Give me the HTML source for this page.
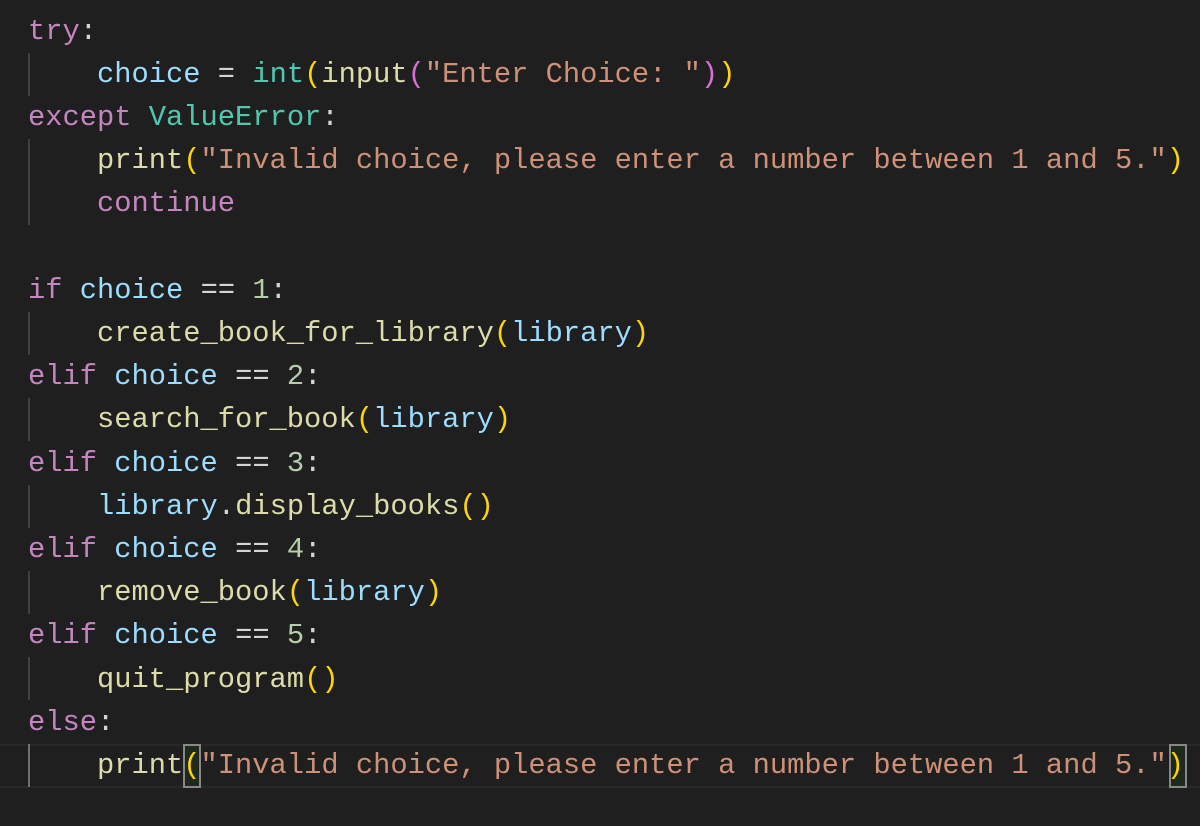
<!DOCTYPE html>
<html><head><style>
body{margin:0;width:1200px;height:826px;background:#1f1f1f;overflow:hidden;position:relative;font-family:"Liberation Mono",monospace;font-size:28.75px;color:#d4d4d4}
.l{position:absolute;left:28px;height:43.2px;line-height:43.2px;white-space:pre}
.k{color:#c586c0}.v{color:#9cdcfe}.f{color:#dcdcaa}.s{color:#ce9178}.n{color:#b5cea8}.c{color:#4ec9b0}.y{color:#ffd700}.p{color:#da70d6}
.g{position:absolute;left:28px;width:2px;background:#404040}
.hl{position:absolute;left:0;width:1200px;top:744px;height:40px;border-top:2px solid #282828;border-bottom:2px solid #282828}
.box{position:absolute;border:2px solid #888;background:#1e2a1e}
</style></head><body>
<div class="hl"></div>
<div class="box" style="left:183px;top:744px;width:14px;height:40px"></div>
<div class="box" style="left:1169px;top:744px;width:14px;height:40px"></div>
<div class="g" style="top:53px;height:43px"></div>
<div class="g" style="top:139px;height:86px"></div>
<div class="g" style="top:312px;height:43px"></div>
<div class="g" style="top:398px;height:43px"></div>
<div class="g" style="top:485px;height:43px"></div>
<div class="g" style="top:571px;height:43px"></div>
<div class="g" style="top:657px;height:43px"></div>
<div class="g" style="top:744px;height:43px;background:#707070"></div>
<div class="l" style="top:9.6px"><span class="k">try</span>:</div>
<div class="l" style="top:52.8px">    <span class="v">choice</span> = <span class="c">int</span><span class="y">(</span><span class="f">input</span><span class="p">(</span><span class="s">"Enter Choice: "</span><span class="p">)</span><span class="y">)</span></div>
<div class="l" style="top:96px"><span class="k">except</span> <span class="c">ValueError</span>:</div>
<div class="l" style="top:139.2px">    <span class="f">print</span><span class="y">(</span><span class="s">"Invalid choice, please enter a number between 1 and 5."</span><span class="y">)</span></div>
<div class="l" style="top:182.4px">    <span class="k">continue</span></div>
<div class="l" style="top:268.8px"><span class="k">if</span> <span class="v">choice</span> == <span class="n">1</span>:</div>
<div class="l" style="top:312px">    <span class="f">create_book_for_library</span><span class="y">(</span><span class="v">library</span><span class="y">)</span></div>
<div class="l" style="top:355.2px"><span class="k">elif</span> <span class="v">choice</span> == <span class="n">2</span>:</div>
<div class="l" style="top:398.4px">    <span class="f">search_for_book</span><span class="y">(</span><span class="v">library</span><span class="y">)</span></div>
<div class="l" style="top:441.6px"><span class="k">elif</span> <span class="v">choice</span> == <span class="n">3</span>:</div>
<div class="l" style="top:484.8px">    <span class="v">library</span>.<span class="f">display_books</span><span class="y">()</span></div>
<div class="l" style="top:528px"><span class="k">elif</span> <span class="v">choice</span> == <span class="n">4</span>:</div>
<div class="l" style="top:571.2px">    <span class="f">remove_book</span><span class="y">(</span><span class="v">library</span><span class="y">)</span></div>
<div class="l" style="top:614.4px"><span class="k">elif</span> <span class="v">choice</span> == <span class="n">5</span>:</div>
<div class="l" style="top:657.6px">    <span class="f">quit_program</span><span class="y">()</span></div>
<div class="l" style="top:700.8px"><span class="k">else</span>:</div>
<div class="l" style="top:744px">    <span class="f">print</span><span class="y">(</span><span class="s">"Invalid choice, please enter a number between 1 and 5."</span><span class="y">)</span></div>
</body></html>
